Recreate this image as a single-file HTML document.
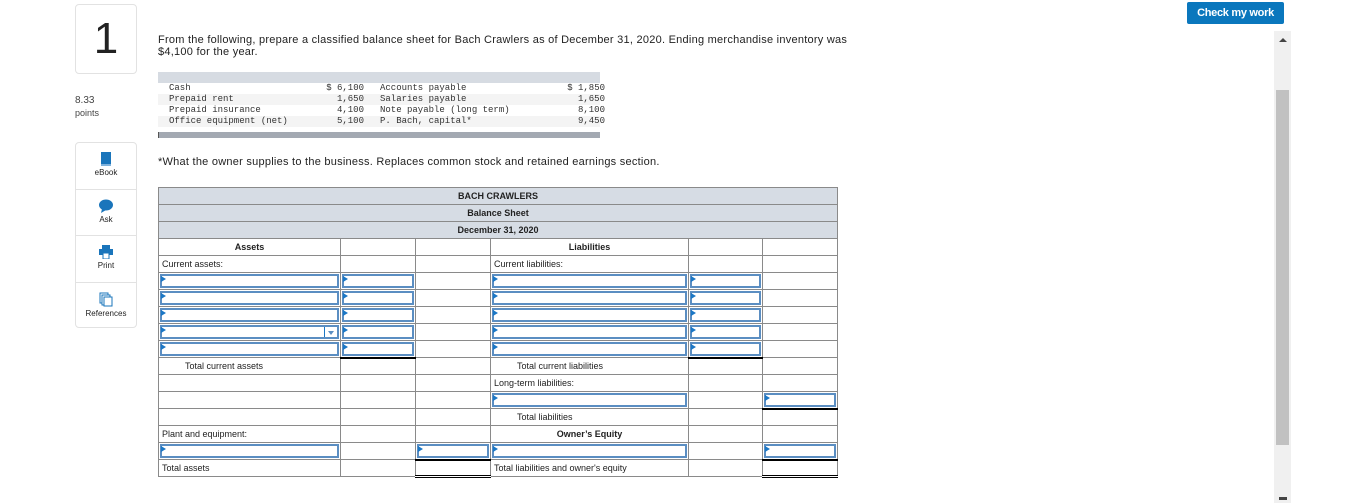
<!DOCTYPE html>
<html><head><meta charset="utf-8"><style>
*{box-sizing:border-box;margin:0;padding:0}
body{width:1365px;height:503px;background:#fff;font-family:"Liberation Sans",Arial,sans-serif;position:relative;overflow:hidden;color:#222}
.abs{position:absolute}
.qnum{left:75px;top:4px;width:62px;height:70px;border:1px solid #e2e2e2;border-radius:4px;font-size:44px;text-align:center;line-height:68px;color:#222}
.pts{left:75px;top:95px;font-size:10px;color:#444;line-height:12px}
.side{left:75px;top:142px;width:62px;height:186px;border:1px solid #e2e2e2;border-radius:4px}
.side div{height:46.5px;border-bottom:1px solid #e2e2e2;text-align:center;font-size:8px;padding-top:9px;color:#222}
.side div:last-child{border-bottom:none}
.q{left:158px;top:34px;font-size:11px;line-height:12px;width:710px;color:#222;letter-spacing:0.25px}
.data{left:158px;top:72px;width:442px;height:66px;background:#fff}
.data pre{font-family:"Liberation Mono",monospace;font-size:9px;line-height:11px;color:#333}
.btn{left:1187px;top:2px;width:97px;height:22px;background:#0a77bd;border-radius:2px;color:#fff;font-weight:bold;font-size:11px;text-align:center;line-height:22px;letter-spacing:-0.3px}
.sb{left:1274px;top:31px;width:17px;height:472px;background:#f0f0f0}
.thumb{left:1276px;top:90px;width:13px;height:355px;background:#c1c1c1}
table{position:absolute;left:158px;top:187px;border-collapse:collapse;table-layout:fixed;font-size:9px}
tr{height:17px}
td{border:1px solid #8a8a8a;height:17px;padding:0 3px;white-space:nowrap;position:relative;line-height:14px;overflow:hidden}
.h td{background:#d6dce4;text-align:center;font-weight:bold;font-size:9px}
.b{font-weight:bold;text-align:center}
.ind{padding-left:26px}
.in{padding:0 1px}
.in span{display:block;height:14px;border:2px solid #5b8ec2;position:relative}
.in span:before{content:"";position:absolute;left:-1px;top:0;border-left:5px solid #1b77c5;border-top:3px solid transparent;border-bottom:3px solid transparent}
.tb{border-bottom:2px solid #000}
.dbl{border-bottom:3px double #000}
</style></head><body>
<div class="abs qnum">1</div>
<div class="abs pts">8.33<br><span style="font-size:9px">points</span></div>
<div class="abs side">
<div><svg width="12" height="14" viewBox="0 0 12 14"><rect x="1" y="0" width="10" height="12" fill="#1a75bb"/><rect x="1" y="12" width="10" height="2" fill="#7fb2dc"/></svg><br>eBook</div>
<div><svg width="14" height="14" viewBox="0 0 14 14"><ellipse cx="7" cy="6" rx="7" ry="5.5" fill="#1a75bb"/><path d="M3 10 L2 14 L7 11Z" fill="#1a75bb"/></svg><br>Ask</div>
<div><svg width="14" height="14" viewBox="0 0 14 14"><rect x="3" y="0" width="8" height="4" fill="#1a75bb"/><rect x="0" y="4" width="14" height="6" fill="#1a75bb"/><rect x="4" y="8" width="6" height="6" fill="#fff" stroke="#1a75bb"/></svg><br>Print</div>
<div><svg width="14" height="15" viewBox="0 0 14 15"><rect x="1" y="1" width="8" height="10" fill="#fff" stroke="#1a75bb"/><rect x="3" y="3" width="8" height="10" fill="#fff" stroke="#1a75bb"/><rect x="5" y="5" width="8" height="9" fill="#fff" stroke="#1a75bb"/></svg><br>References</div>
</div>
<div class="abs q">From the following, prepare a classified balance sheet for Bach Crawlers as of December 31, 2020. Ending merchandise inventory was $4,100 for the year.</div>
<div class="abs data">
<div style="height:11px;background:#d6dbe2"></div>
<div style="height:44px;background:linear-gradient(#fff 0 11px,#f4f4f4 11px 22px,#fff 22px 33px,#f4f4f4 33px)">
<pre style="position:absolute;left:11px;top:11px">Cash
Prepaid rent
Prepaid insurance
Office equipment (net)</pre>
<pre style="position:absolute;left:148px;top:11px;text-align:right;width:58px">$ 6,100
1,650
4,100
5,100</pre>
<pre style="position:absolute;left:222px;top:11px">Accounts payable
Salaries payable
Note payable (long term)
P. Bach, capital*</pre>
<pre style="position:absolute;left:380px;top:11px;text-align:right;width:67px">$ 1,850
1,650
8,100
9,450</pre>
</div>
<div style="position:absolute;top:60px;left:0;width:442px;height:6px;background:#a3a9b2;border-left:1px solid #555"></div>
</div>
<div class="abs q" style="top:156px">*What the owner supplies to the business. Replaces common stock and retained earnings section.</div>

<table>
<colgroup><col style="width:182px"><col style="width:75px"><col style="width:75px"><col style="width:198px"><col style="width:74px"><col style="width:75px"></colgroup>
<tr class="h"><td colspan="6">BACH CRAWLERS</td></tr>
<tr class="h"><td colspan="6">Balance Sheet</td></tr>
<tr class="h"><td colspan="6">December 31, 2020</td></tr>
<tr><td class="b">Assets</td><td></td><td></td><td class="b">Liabilities</td><td></td><td></td></tr>
<tr><td>Current assets:</td><td></td><td></td><td>Current liabilities:</td><td></td><td></td></tr>
<tr><td class="in"><span></span></td><td class="in"><span></span></td><td></td><td class="in"><span></span></td><td class="in"><span></span></td><td></td></tr>
<tr><td class="in"><span></span></td><td class="in"><span></span></td><td></td><td class="in"><span></span></td><td class="in"><span></span></td><td></td></tr>
<tr><td class="in"><span></span></td><td class="in"><span></span></td><td></td><td class="in"><span></span></td><td class="in"><span></span></td><td></td></tr>
<tr><td class="in"><span><i style="position:absolute;right:12px;top:0;height:10px;border-left:1px solid #1b77c5"></i><i style="position:absolute;right:3px;top:4px;border-top:4px solid #5b8ec2;border-left:3px solid transparent;border-right:3px solid transparent"></i></span></td><td class="in"><span></span></td><td></td><td class="in"><span></span></td><td class="in"><span></span></td><td></td></tr>
<tr><td class="in"><span></span></td><td class="in tb"><span></span></td><td></td><td class="in"><span></span></td><td class="in tb"><span></span></td><td></td></tr>
<tr><td class="ind">Total current assets</td><td></td><td></td><td class="ind">Total current liabilities</td><td></td><td></td></tr>
<tr><td></td><td></td><td></td><td>Long-term liabilities:</td><td></td><td></td></tr>
<tr><td></td><td></td><td></td><td class="in"><span></span></td><td></td><td class="in tb"><span></span></td></tr>
<tr><td></td><td></td><td></td><td class="ind">Total liabilities</td><td></td><td></td></tr>
<tr><td>Plant and equipment:</td><td></td><td></td><td class="b">Owner’s Equity</td><td></td><td></td></tr>
<tr><td class="in"><span></span></td><td></td><td class="in tb"><span></span></td><td class="in"><span></span></td><td></td><td class="in tb"><span></span></td></tr>
<tr><td>Total assets</td><td></td><td class="dbl"></td><td>Total liabilities and owner's equity</td><td></td><td class="dbl"></td></tr>
</table>

<div class="abs btn">Check my work</div>
<div class="abs sb"></div>
<div class="abs thumb"></div>
<div class="abs" style="left:1279px;top:38px;border-bottom:4px solid #444;border-left:4px solid transparent;border-right:4px solid transparent"></div>
<div class="abs" style="left:1279px;top:497px;width:8px;height:3px;background:#444"></div>
</body></html>
